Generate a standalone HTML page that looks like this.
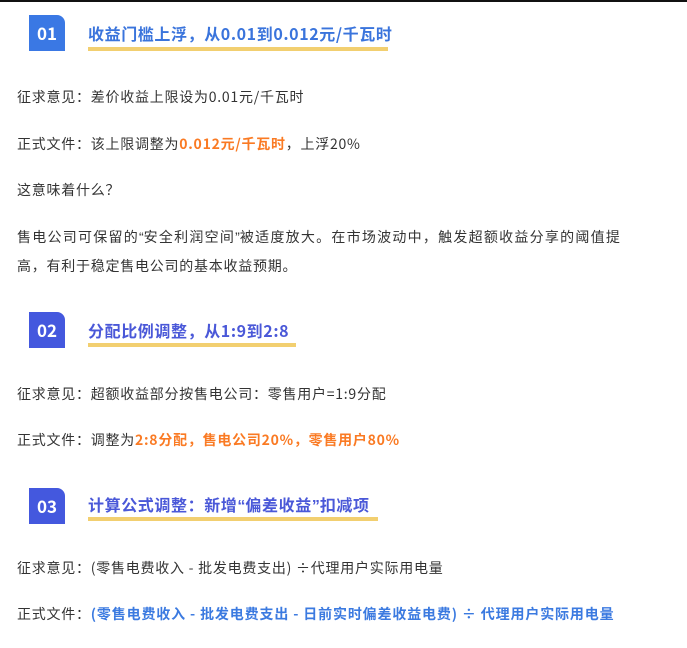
<!DOCTYPE html>
<html><head><meta charset="utf-8"><style>
body{margin:0;width:687px;height:648px;background:#fff;position:relative;overflow:hidden;font-family:"Noto Sans CJK SC","Liberation Sans",sans-serif;color:#333;}
.top{position:absolute;left:0;top:0;width:687px;height:2px;background:#111;}
.b{position:absolute;left:29px;width:36px;height:36px;border-top-right-radius:8px;color:#fff;font-weight:bold;font-size:17px;text-align:center;line-height:36px;}
.t{position:absolute;left:88px;font-size:16px;font-weight:bold;line-height:20px;white-space:nowrap;letter-spacing:0.6px;}
.u{position:absolute;left:88px;height:4px;background:#f2cf70;}
.p{position:absolute;left:17px;font-size:14px;line-height:20px;white-space:nowrap;letter-spacing:0.75px;}
.o{color:#fa7a23;font-weight:bold;}
.bl{color:#3b7ae0;font-weight:bold;letter-spacing:0.85px;}
.q{font-family:"Liberation Sans",sans-serif;letter-spacing:0;}
</style></head><body>
<div class="top"></div>
<div class="b" style="top:15px;background:#3a78e4">01</div>
<div class="t" style="top:23px;color:#3a74dc">收益门槛上浮，从0.01到0.012元/千瓦时</div>
<div class="u" style="top:47px;width:300px"></div>
<div class="p" style="top:87px">征求意见：差价收益上限设为0.01元/千瓦时</div>
<div class="p" style="top:134px">正式文件：该上限调整为<span class="o">0.012元/千瓦时</span>，上浮20%</div>
<div class="p" style="top:180px">这意味着什么？</div>
<div class="p" style="top:227px;letter-spacing:1.25px">售电公司可保留的<span class="q">“</span>安全利润空间<span class="q">”</span>被适度放大。在市场波动中，触发超额收益分享的阈值提</div>
<div class="p" style="top:256px">高，有利于稳定售电公司的基本收益预期。</div>
<div class="b" style="top:312px;background:#4458de">02</div>
<div class="t" style="top:320px;color:#4a58d8">分配比例调整，从1:9到2:8</div>
<div class="u" style="top:343px;width:208px"></div>
<div class="p" style="top:384px">征求意见：超额收益部分按售电公司：零售用户=1:9分配</div>
<div class="p" style="top:430px">正式文件：调整为<span class="o">2:8分配，售电公司20%，零售用户80%</span></div>
<div class="b" style="top:488px;background:#4458de">03</div>
<div class="t" style="top:494px;color:#4a58d8">计算公式调整：新增<span class="q">“</span>偏差收益<span class="q">”</span>扣减项</div>
<div class="u" style="top:517px;width:290px"></div>
<div class="p" style="top:558px">征求意见：(零售电费收入 - 批发电费支出) ÷代理用户实际用电量</div>
<div class="p" style="top:604px">正式文件：<span class="bl">(零售电费收入 - 批发电费支出 - 日前实时偏差收益电费) ÷ 代理用户实际用电量</span></div>
</body></html>
